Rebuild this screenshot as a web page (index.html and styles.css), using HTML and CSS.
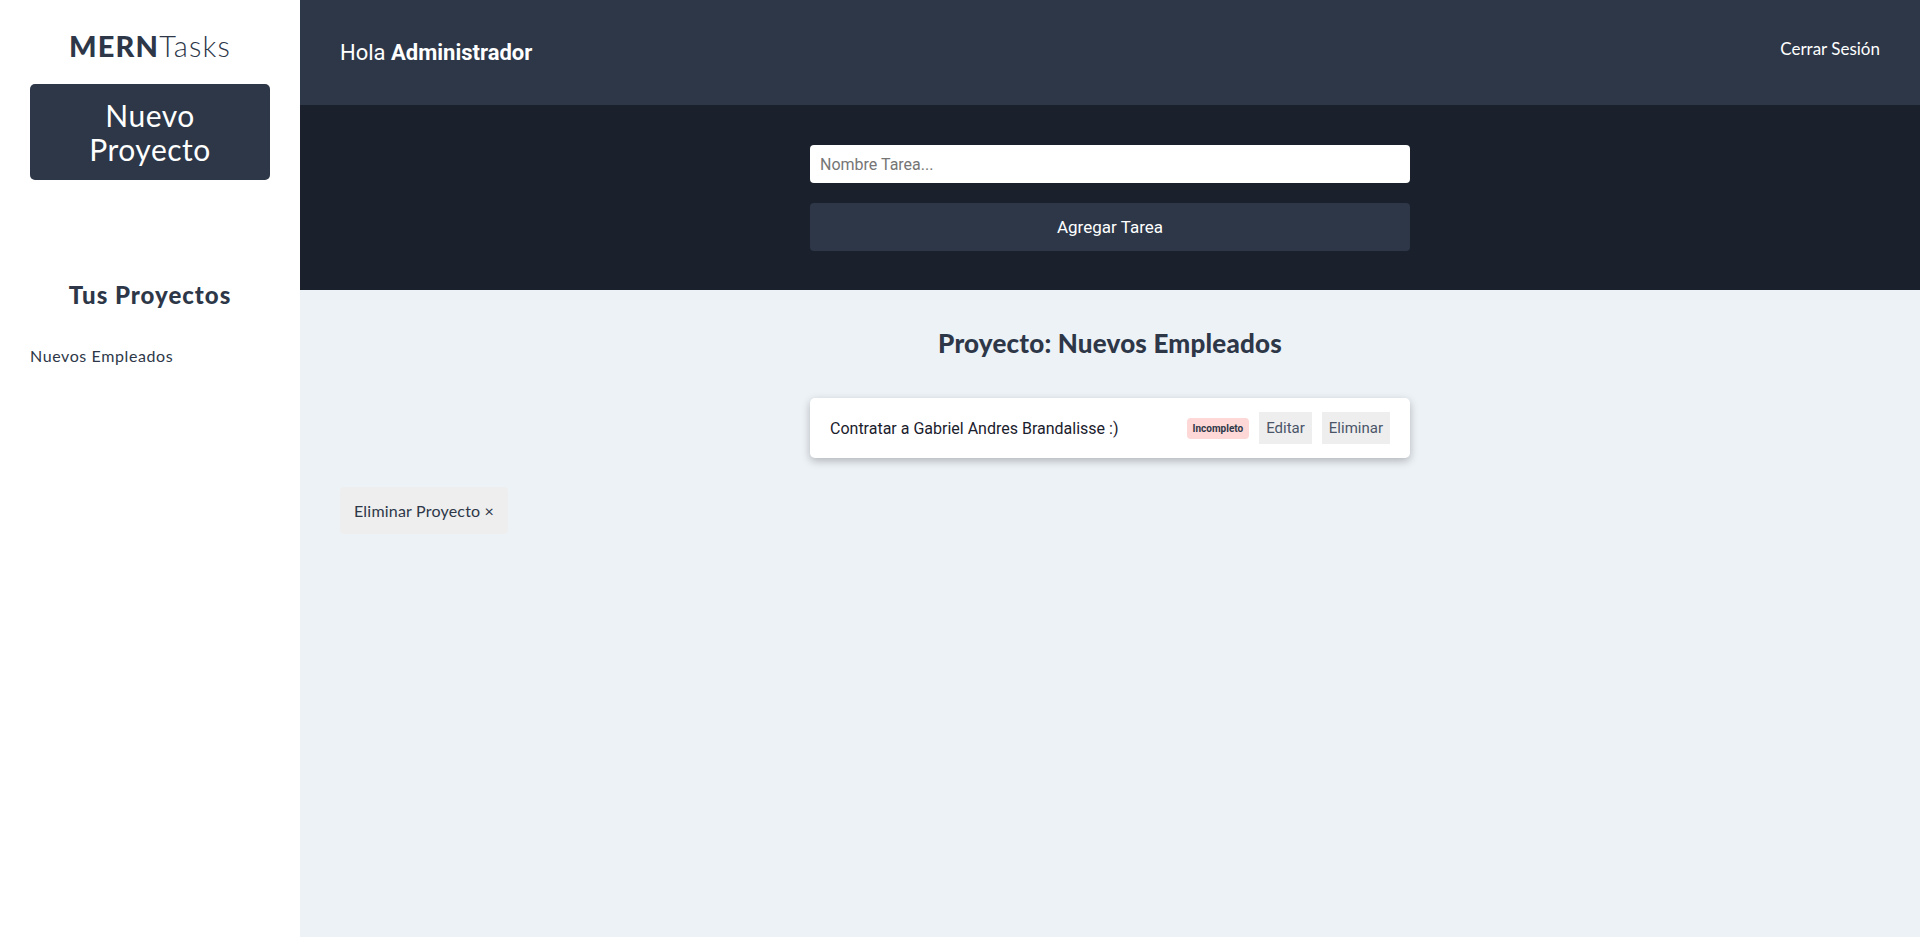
FILE: index.html
```html
<!DOCTYPE html>
<html lang="es">
<head>
<meta charset="utf-8">
<title>MERNTasks</title>
<link rel="stylesheet" href="styles.css">
</head>
<body>
<div class="app">
  <aside class="sidebar">
    <h1 class="logo"><span class="logo-bold">MERN</span>Tasks</h1>
    <button class="btn-new" type="button">Nuevo Proyecto</button>
    <h2 class="side-title">Tus Proyectos</h2>
    <ul class="project-list">
      <li class="project-item">Nuevos Empleados</li>
    </ul>
  </aside>
  <div class="main">
    <header class="topbar">
      <p class="greeting">Hola <strong>Administrador</strong></p>
      <nav class="nav"><a class="logout" href="#">Cerrar Sesión</a></nav>
    </header>
    <section class="form-section">
      <form class="task-form">
        <input class="task-input" type="text" placeholder="Nombre Tarea...">
        <button class="btn-add" type="button">Agregar Tarea</button>
      </form>
    </section>
    <section class="content">
      <h2 class="project-title">Proyecto: Nuevos Empleados</h2>
      <ul class="task-list">
        <li class="task">
          <p class="task-name">Contratar a Gabriel Andres Brandalisse :)</p>
          <div class="task-actions">
            <span class="badge">Incompleto</span>
            <button class="btn-light" type="button">Editar</button>
            <button class="btn-light" type="button">Eliminar</button>
          </div>
        </li>
      </ul>
      <button class="btn-delete-project" type="button">Eliminar Proyecto &times;</button>
    </section>
  </div>
</div>
</body>
</html>
```

FILE: styles.css
```css
* { box-sizing: border-box; }
html, body { margin: 0; padding: 0; height: 100%; }
body {
  font-family: Lato, "Open Sans", sans-serif;
  color: #2d3748;
  background: #edf2f7;
}
.app { display: flex; min-height: 937px; }

.sidebar {
  width: 300px;
  flex: 0 0 300px;
  background: #ffffff;
  padding: 29px 30px;
}
.logo {
  margin: 0;
  text-align: center;
  font-size: 29px;
  line-height: 34px;
  font-weight: 300;
  letter-spacing: 1.2px;
  color: #2d3748;
}
.logo-bold { font-weight: 900; letter-spacing: 1.2px; }
.btn-new {
  display: block;
  width: 100%;
  margin-top: 21px;
  padding: 14px 20px;
  background: #2d3748;
  color: #ffffff;
  border: none;
  border-radius: 5px;
  font-family: Lato, "Open Sans", sans-serif;
  font-size: 30px;
  line-height: 34px;
  font-weight: 400;
  letter-spacing: 0.5px;
}
.side-title {
  margin: 100px 0 0;
  text-align: center;
  font-size: 24px;
  line-height: 30px;
  font-weight: 900;
  letter-spacing: 1px;
  color: #2d3748;
}
.project-list { list-style: none; margin: 34px 0 0; padding: 0; }
.project-item { font-size: 16px; line-height: 24px; letter-spacing: 0.6px; color: #2d3748; }

.main { flex: 1; display: flex; flex-direction: column; }
.topbar {
  height: 105px;
  background: #2d3748;
  display: flex;
  align-items: center;
  justify-content: space-between;
  padding: 0 40px;
}
.greeting {
  margin: 0;
  color: #ffffff;
  font-family: Roboto, sans-serif;
  font-size: 22px;
  font-weight: 400;
}
.greeting strong { font-weight: 700; }
.nav { padding-bottom: 8px; }
.logout {
  color: #ffffff;
  text-decoration: none;
  font-size: 17px;
}

.form-section {
  background: #1a202c;
  padding: 40px 0 39px;
}
.task-form {
  width: 600px;
  margin: 0 auto;
  display: flex;
  flex-direction: column;
  gap: 20px;
}
.task-input {
  height: 38px;
  border: none;
  border-radius: 4px;
  padding: 0 10px;
  font-family: Roboto, sans-serif;
  font-size: 16px;
  color: #2d3748;
  background: #ffffff;
}
.task-input::placeholder { color: #757575; }
.btn-add {
  height: 48px;
  border: none;
  border-radius: 4px;
  background: #2d3748;
  color: #ffffff;
  font-family: Roboto, sans-serif;
  font-size: 17px;
}

.content { padding: 36px 40px 40px; }
.project-title {
  margin: 0;
  text-align: center;
  font-size: 26px;
  line-height: 34px;
  font-weight: 900;
  letter-spacing: 0.2px;
  color: #2d3748;
}
.task-list { list-style: none; padding: 0; margin: 38px auto 0; width: 600px; }
.task {
  height: 60px;
  background: #ffffff;
  border-radius: 5px;
  box-shadow: 0 3px 8px rgba(0,0,0,0.25);
  display: flex;
  align-items: center;
  justify-content: space-between;
  padding: 0 20px 0 20px;
}
.task-name {
  margin: 0;
  font-family: Roboto, sans-serif;
  font-size: 16px;
  color: #1a202c;
}
.task-actions { display: flex; align-items: center; gap: 10px; }
.badge {
  background: #fed7d7;
  color: #2d3748;
  font-family: Roboto, sans-serif;
  font-weight: 700;
  font-size: 10px;
  padding: 5px 6px;
  border-radius: 4px;
}
.btn-light {
  height: 32px;
  border: none;
  background: #eeeeee;
  color: #4a5568;
  font-family: Roboto, sans-serif;
  font-size: 15px;
  padding: 0 7px;
}
.btn-delete-project {
  margin-top: 29px;
  height: 47px;
  padding: 0 14px;
  border: none;
  border-radius: 4px;
  background: #eeeeee;
  color: #2d3748;
  font-family: Lato, "Open Sans", sans-serif;
  font-size: 16px;
  letter-spacing: 0.2px;
}
```
